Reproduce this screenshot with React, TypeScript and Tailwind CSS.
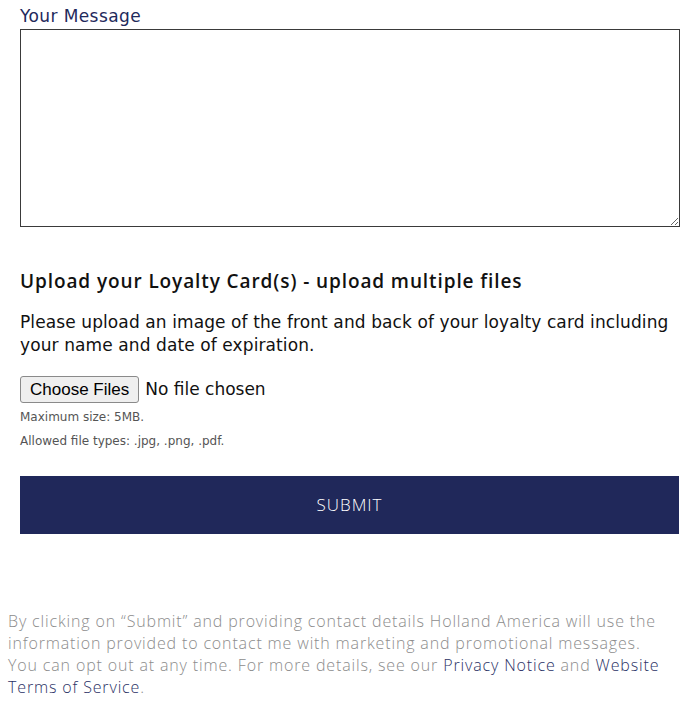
import React from "react";

export default function App() {
  const font = { fontFamily: '"DejaVu Sans", "Noto Sans", sans-serif' };
  const open = { fontFamily: '"Open Sans", "Noto Sans", sans-serif' };
  return (
    <div className="w-[700px] h-[721px] bg-white overflow-hidden" style={font}>
      <div className="px-[20px] pt-[4px]">
        <label className="block text-[17px] leading-[24px] text-[#1f2a5c] tracking-[0.4px]">Your Message</label>
        <textarea className="block w-[660px] h-[198px] mt-[1px] border border-[#3a3a3a] resize-y bg-white"></textarea>
        <h2 className="mt-[41px] text-[19px] leading-[26px] font-semibold text-[#111] tracking-[0.9px]" style={open}>
          Upload your Loyalty Card(s) - upload multiple files
        </h2>
        <p className="mt-[17px] text-[17px] leading-[23px] text-[#111] tracking-[0.1px]">
          Please upload an image of the front and back of your loyalty card including your name and date of expiration.
        </p>
        <div className="mt-[19px] flex items-center h-[27px]">
          <button
            className="h-[27px] px-[9px] rounded-[3px] border border-[#8a8a8a] bg-[#efefef] text-[17px] text-black"
            style={{ fontFamily: '"Liberation Sans", Arial, sans-serif' }}
          >
            Choose Files
          </button>
          <span className="ml-[6px] text-[17px] text-[#111]">No file chosen</span>
        </div>
        <div className="mt-[2px] text-[12px] leading-[24px] text-[#555]">Maximum size: 5MB.</div>
        <div className="text-[12px] leading-[24px] text-[#555]">Allowed file types: .jpg, .png, .pdf.</div>
        <button className="mt-[23px] w-[659px] h-[58px] bg-[#20285a] text-white text-[17px] tracking-[1px] font-light" style={open}>
          SUBMIT
        </button>
      </div>
      <p className="mt-[76px] ml-[8px] w-[658px] text-[16px] leading-[22px] text-[#8c8c8c] font-light tracking-[0.85px]" style={open}>
        By clicking on “Submit” and providing contact details Holland America will use the information provided to contact me with marketing and promotional messages. You can opt out at any time. For more details, see our{" "}
        <span className="text-[#2a3165]">Privacy Notice</span> and{" "}
        <span className="text-[#2a3165]">Website Terms of Service</span>.
      </p>
    </div>
  );
}
